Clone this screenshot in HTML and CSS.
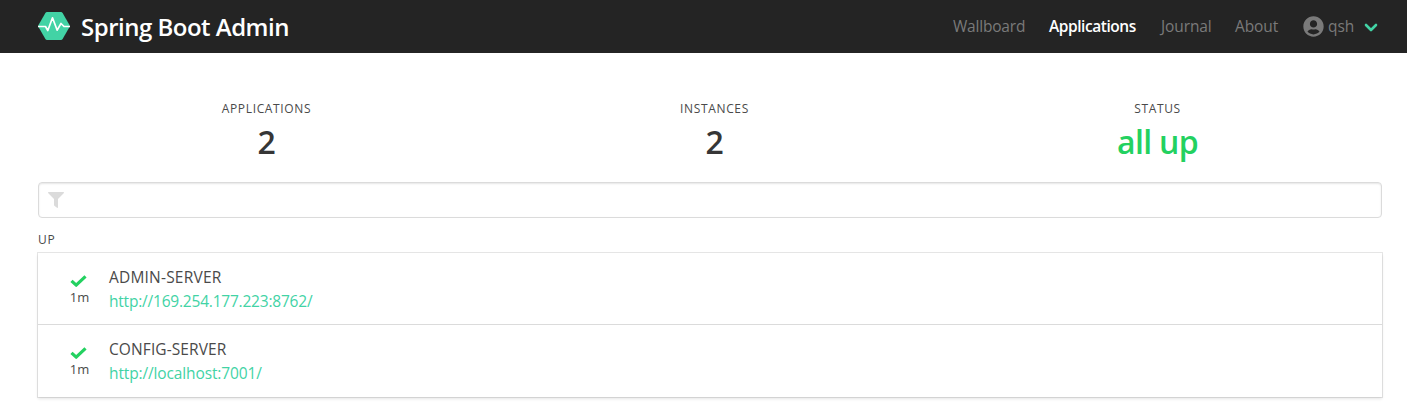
FILE: index.html
```html
<!DOCTYPE html>
<html lang="en">
<head>
<meta charset="utf-8">
<title>Spring Boot Admin</title>
<link rel="stylesheet" href="styles.css">
</head>
<body>
<nav class="navbar">
  <a class="brand">
    <svg class="logo" width="32" height="28" viewBox="0 0 32 28"><path d="M9 0h14q1 0 1.600 1L31.500 13q.5 1 0 2l-6.900 12q-.6 1-1.600 1H9q-1 0-1.600-1L.5 15q-.5-1 0-2L7.400 1Q8 0 9 0z" fill="#42d3a5"/><path d="M0 14.500h7.500L9.800 18.500 14.500 5.800l4.700 12.400 3.800-6.700 3 3H32" fill="none" stroke="#fff" stroke-width="1.700" stroke-linejoin="round"/></svg>
    <span class="brand-name">Spring Boot Admin</span>
  </a>
  <div class="menu">
    <a class="item wallboard">Wallboard</a>
    <a class="item applications active">Applications</a>
    <a class="item journal">Journal</a>
    <a class="item about">About</a>
    <a class="item user">
      <svg width="21" height="21" viewBox="0 0 496 512"><path fill="#7a7a7a" d="M248 8C111 8 0 119 0 256s111 248 248 248 248-111 248-248S385 8 248 8zm0 96c48.600 0 88 39.400 88 88s-39.400 88-88 88-88-39.400-88-88 39.400-88 88-88zm0 344c-58.700 0-111.300-26.600-146.500-68.200 18.800-35.400 55.600-59.800 98.500-59.800 2.400 0 4.800.4 7.100 1.100 13 4.200 26.600 6.900 40.900 6.900s28-2.700 40.900-6.900c2.300-.7 4.700-1.100 7.100-1.100 42.900 0 79.700 24.400 98.500 59.800C359.300 421.400 306.700 448 248 448z"/></svg>
      <span class="user-name">qsh</span>
      <svg class="chevron" width="14" height="9" viewBox="0 0 14 9"><path d="M2 2l5 5 5-5" fill="none" stroke="#42d3a5" stroke-width="2.600" stroke-linecap="round" stroke-linejoin="round"/></svg>
    </a>
  </div>
</nav>
<main class="container">
  <section class="level">
    <div><p class="heading h-apps">Applications</p><p class="value">2</p></div>
    <div><p class="heading h-instances">Instances</p><p class="value">2</p></div>
    <div><p class="heading h-status">Status</p><p class="value up">all up</p></div>
  </section>
  <div class="filter">
    <svg width="16" height="16" viewBox="0 0 16 16"><path d="M.4 0h15.200q.7.500.1 1.200L10 7v8.500q-.3.700-1 .3L6.300 13.800 6 13V7L.3 1.200Q-.2.500.4 0z" fill="#dbdbdb"/></svg>
  </div>
  <p class="heading group">Up</p>
  <section class="card">
    <div class="row">
      <div class="status"><svg width="17" height="12" viewBox="0 0 17 12"><path d="M1.500 5.800l4.700 4.400L15.500 1.400" fill="none" stroke="#23d160" stroke-width="3.200" stroke-linejoin="round"/></svg><span>1m</span></div>
      <div class="info"><span class="app-name admin">ADMIN-SERVER</span><a class="link ip">http://169.254.177.223:8762/</a></div>
    </div>
    <div class="row">
      <div class="status"><svg width="17" height="12" viewBox="0 0 17 12"><path d="M1.500 5.800l4.700 4.400L15.500 1.400" fill="none" stroke="#23d160" stroke-width="3.200" stroke-linejoin="round"/></svg><span>1m</span></div>
      <div class="info"><span class="app-name config">CONFIG-SERVER</span><a class="link local">http://localhost:7001/</a></div>
    </div>
  </section>
</main>
</body>
</html>
```
FILE: styles.css
```css
* { box-sizing: border-box; }
body { margin: 0; height: 407px; background: #fff; color: #4a4a4a; font: 16px/24px "Segoe UI", "Open Sans", "Noto Sans", sans-serif; }
p { margin: 0; }
svg { display: block; flex: none; }
.navbar { height: 53px; padding: 0 28px 0 38px; background: #242424; display: flex; justify-content: space-between; }
.brand { display: flex; align-items: center; }
.logo { margin-bottom: 1px; }
.brand-name { margin: 1px 0 0 11px; color: #fff; font-size: 24px; font-weight: 600; letter-spacing: -0.5px; white-space: nowrap; }
.menu { display: flex; align-items: center; gap: 24px; padding-bottom: 1px; color: #7a7a7a; font-size: 15.500px; }
.item { white-space: nowrap; display: block; }
.wallboard { width: 72px; letter-spacing: -0.2px; }
.applications { width: 87px; letter-spacing: -0.45px; }
.journal { width: 51px; padding-left: 1px; letter-spacing: -0.1px; }
.about { width: 44px; letter-spacing: -0.1px; }
.active { color: #fff; font-weight: 600; }
.user { display: flex; align-items: center; }
.user-name { width: 26px; margin-left: 4px; letter-spacing: -0.1px; }
.chevron { margin: 2px 1px 0 10px; }
.container { padding: 48px 25px 0 38px; }
.level { display: grid; grid-template-columns: 457px 439px 447px; text-align: center; height: 81px; }
.heading { font-size: 12px; line-height: 16px; letter-spacing: 0.65px; text-transform: uppercase; }
.value { margin-top: 7px; font-size: 32px; line-height: 36px; font-weight: 600; color: #363636; letter-spacing: -0.5px; }
.value.up { color: #23d160; letter-spacing: -0.7px; }
.filter { width: 1344px; height: 36px; padding: 9px; border: 1px solid #dbdbdb; border-radius: 4px; box-shadow: inset 0 1px 2px rgba(10, 10, 10, .1); }
.group { margin-top: 14px; height: 20px; }
.card { width: 1344px; box-shadow: 0 2px 3px rgba(10, 10, 10, .1), 0 0 0 1px rgba(10, 10, 10, .1); margin-top: 1px; }
.row { height: 72px; padding: 12px 0; display: flex; }
.row + .row { border-top: 1px solid #dbdbdb; height: 73px; margin-top: -1px; padding-top: 12px; }
.status { width: 19px; margin: 10px 20px 0 32px; display: flex; flex-direction: column; align-items: center; font-size: 13px; line-height: 16px; }
.status svg { margin-right: 2px; }
.status span { margin-top: 2px; }
.info { display: flex; flex-direction: column; white-space: nowrap; font-size: 15.500px; }
.admin { letter-spacing: 0.2px; }
.config { letter-spacing: 0.1px; }
.link { color: #42d3a5; }
.ip { letter-spacing: -0.21px; }
.local { letter-spacing: -0.13px; }
```
